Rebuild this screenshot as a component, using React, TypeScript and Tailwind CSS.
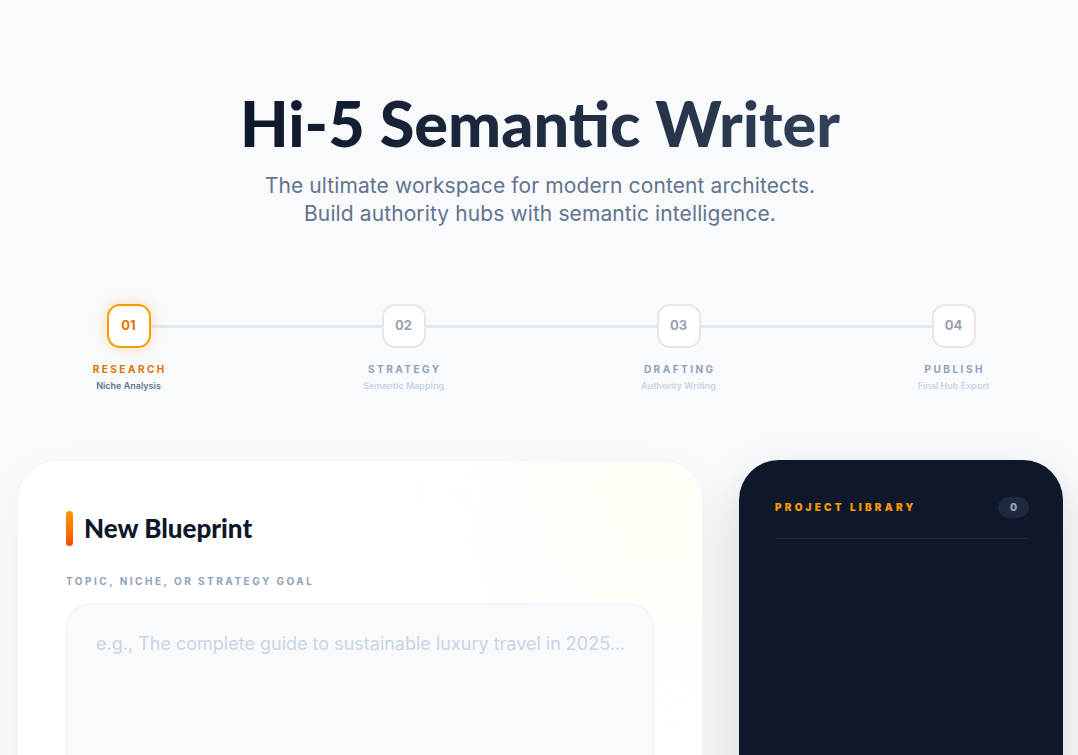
import React from 'react';

const steps = [
  { num: '01', title: 'Research', sub: 'Niche Analysis' },
  { num: '02', title: 'Strategy', sub: 'Semantic Mapping' },
  { num: '03', title: 'Drafting', sub: 'Authority Writing' },
  { num: '04', title: 'Publish', sub: 'Final Hub Export' },
];

const Stepper = ({ active }: { active: number }) => (
  <div className="relative mx-auto flex w-[925px] translate-x-[1px] justify-between">
    {/* connector */}
    <div className="absolute left-[50px] right-[50px] top-[21px] h-[3px] bg-slate-200" />
    {steps.map((step, i) => {
      const on = i === active;
      return (
        <div key={step.num} className="relative flex w-[100px] flex-col items-center">
          <div
            className={
              on
                ? 'flex h-11 w-11 items-center justify-center rounded-[13px] border-2 border-amber-500 bg-white text-[13px] font-bold text-amber-600 shadow-[0_0_14px_rgba(245,158,11,0.3)]'
                : 'flex h-11 w-11 items-center justify-center rounded-[13px] border-2 border-gray-200 bg-white text-[13px] font-bold text-gray-400'
            }
          >
            {step.num}
          </div>
          <div
            className={`mt-[14px] pl-[0.25em] text-[10px] font-bold uppercase leading-[14px] tracking-[0.25em] ${
              on ? 'text-amber-600' : 'text-slate-400'
            }`}
          >
            {step.title}
          </div>
          <div className={`mt-[4px] text-[9px] font-semibold leading-3 ${on ? 'text-slate-500' : 'text-slate-300'}`}>
            {step.sub}
          </div>
        </div>
      );
    })}
  </div>
);

export default function App() {
  return (
    <div className="min-h-screen bg-slate-50 font-['Inter',sans-serif]">
      <div className="pl-[17px] pr-[15px] pt-[92px] pb-16">
        {/* Hero */}
        <div className="text-center">
          <h1 className="inline-block bg-linear-to-r from-slate-900 to-slate-700 bg-clip-text font-['Lato',sans-serif] text-[63px] font-black leading-[62px] tracking-normal text-transparent">
            Hi-5 Semantic Writer
          </h1>
          <p className="mt-[18px] text-[21px] leading-7 tracking-[0.005em] text-slate-500">
            The ultimate workspace for modern content architects.
            <br />
            Build authority hubs with semantic intelligence.
          </p>
        </div>

        <div className="mt-[76px]">
          <Stepper active={0} />
        </div>

        {/* Workspace */}
        <div className="mt-[68px] grid grid-cols-[minmax(0,1fr)_324px] gap-[36px]">
          <div className="relative overflow-hidden rounded-[2.5rem] border border-slate-100 bg-white p-12 shadow-[0_20px_50px_rgba(15,23,42,0.05)]">
            <div className="pointer-events-none absolute -right-28 -top-28 h-72 w-72 rounded-full bg-amber-50 opacity-50 blur-3xl" />
            <div className="relative">
              <div className="flex items-center gap-[11px]">
                <div className="h-[35px] w-[7px] rounded-full bg-linear-to-b from-amber-500 to-orange-600" />
                <h2 className="font-['Lato',sans-serif] text-[26px] font-black text-slate-900">
                  New Blueprint
                </h2>
              </div>
              <label className="mt-[25px] block text-[10px] font-bold uppercase leading-4 tracking-[0.25em] text-slate-400">
                Topic, Niche, or Strategy Goal
              </label>
              <textarea
                className="mt-[14px] block h-[240px] w-full resize-none rounded-3xl border-2 border-slate-100 bg-slate-50 pl-7 pr-3 pt-[25px] text-[18px] font-normal text-slate-700 outline-none placeholder:text-slate-300"
                placeholder="e.g., The complete guide to sustainable luxury travel in 2025..."
              />
            </div>
          </div>

          <div className="min-h-[560px] rounded-[2.5rem] bg-slate-900 py-9 pl-9 pr-[34px] shadow-[0_20px_50px_rgba(15,23,42,0.15)]">
            <div className="flex items-center justify-between border-b border-slate-800 pb-5 pt-px">
              <span className="text-[10px] font-black uppercase tracking-[0.32em] text-amber-500">
                Project Library
              </span>
              <span className="rounded-full bg-slate-800 px-3 py-[3px] text-[10px] font-black text-slate-400">
                0
              </span>
            </div>
          </div>
        </div>
      </div>
    </div>
  );
}
